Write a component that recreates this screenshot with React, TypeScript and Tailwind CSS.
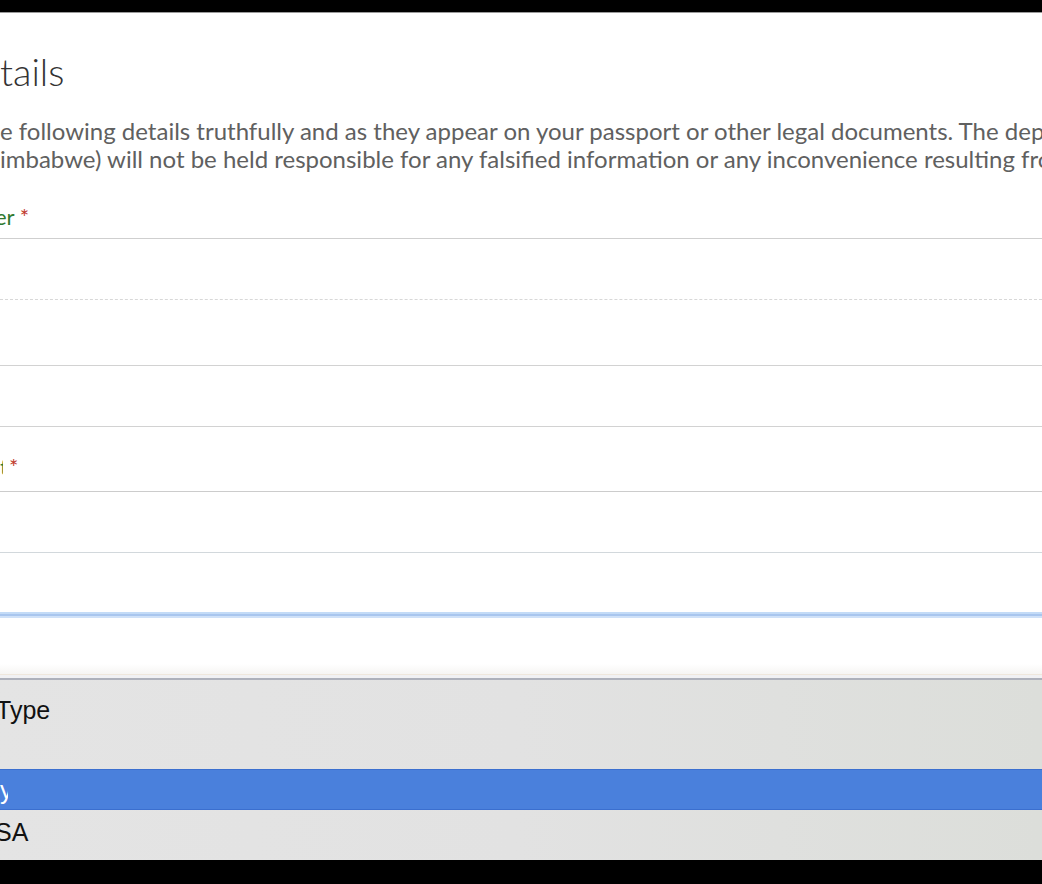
import React from "react";

export default function App() {
  return (
    <div className="w-[1042px] h-[884px] overflow-hidden bg-black flex flex-col">
      <div className="h-[12px] bg-black shrink-0" />
      <div className="h-[1px] bg-[#9a9a9a] shrink-0" />
      <div className="bg-white flex flex-col shrink-0 overflow-hidden whitespace-nowrap font-['Lato',sans-serif]">
        <div className="h-[35px]" />
        <h1 className="text-[38px] leading-[46px] font-light text-[#333]">tails</h1>
        <div className="h-[23px]" />
        <p className="text-[24px] leading-[28px] text-[#606060]">
          e following details truthfully and as they appear on your passport or other legal documents. The dep
          <br />
          imbabwe) will not be held responsible for any falsified information or any inconvenience resulting fro
        </p>
        <div className="h-[65px] flex items-end pb-[8px] text-[22px] leading-[26px]">
          <span className="text-[#2f7a2f] -ml-[5px]">er</span>
          <span className="text-[#c0392b] ml-[5px]">*</span>
        </div>
        <div className="h-[61px] border-t border-[#cfcfcf]" />
        <div className="h-[66px] border-t border-dashed border-[#d8d8d8]" />
        <div className="h-[61px] border-t border-[#d2d2d2]" />
        <div className="h-[65px] border-t border-[#d2d2d2] flex items-end pb-[11px] text-[22px] leading-[26px]">
          <span className="text-[#2f7a2f] w-[3px] overflow-hidden">t</span>
          <span className="text-[#c0392b] ml-[6px]">*</span>
        </div>
        <div className="h-[61px] border-t border-[#cccccc]" />
        <div className="h-[60px] border-t border-[#d2d8dc]" />
        <div className="h-[2px] bg-[#c3dbf7]" />
        <div className="h-[2px] bg-[#a9c6ee]" />
        <div className="h-[2px] bg-[#cfe1f8]" />
        <div className="h-[46px] bg-white" />
        <div className="h-[10px] bg-gradient-to-b from-white to-[#f6f5f3]" />
        <div className="h-[1px] bg-[#efe7dc]" />
        <div className="h-[3px] bg-[#f1f1f3]" />
      </div>
      <div className="h-[2px] bg-[#aeb1bb] shrink-0" />
      <div className="flex-1 flex flex-col bg-gradient-to-r from-[#e4e4e4] via-[#e2e2e2] to-[#dcdeda] font-['Liberation_Sans',Arial,sans-serif] text-[25px] leading-[28px] whitespace-nowrap overflow-hidden">
        <div className="h-[89px] pt-[16px] text-[#111]">
          <span className="block -ml-[4px]">Type</span>
        </div>
        <div className="h-[41px] bg-[#4a80dc] border-y border-[#3b6fcf] flex items-center text-white">
          <span className="w-[8px] overflow-hidden">y</span>
        </div>
        <div className="h-[50px] pt-[8px] text-[#111]">
          <span className="block -ml-[5px]">SA</span>
        </div>
        <div className="flex-1 bg-black" />
      </div>
    </div>
  );
}
